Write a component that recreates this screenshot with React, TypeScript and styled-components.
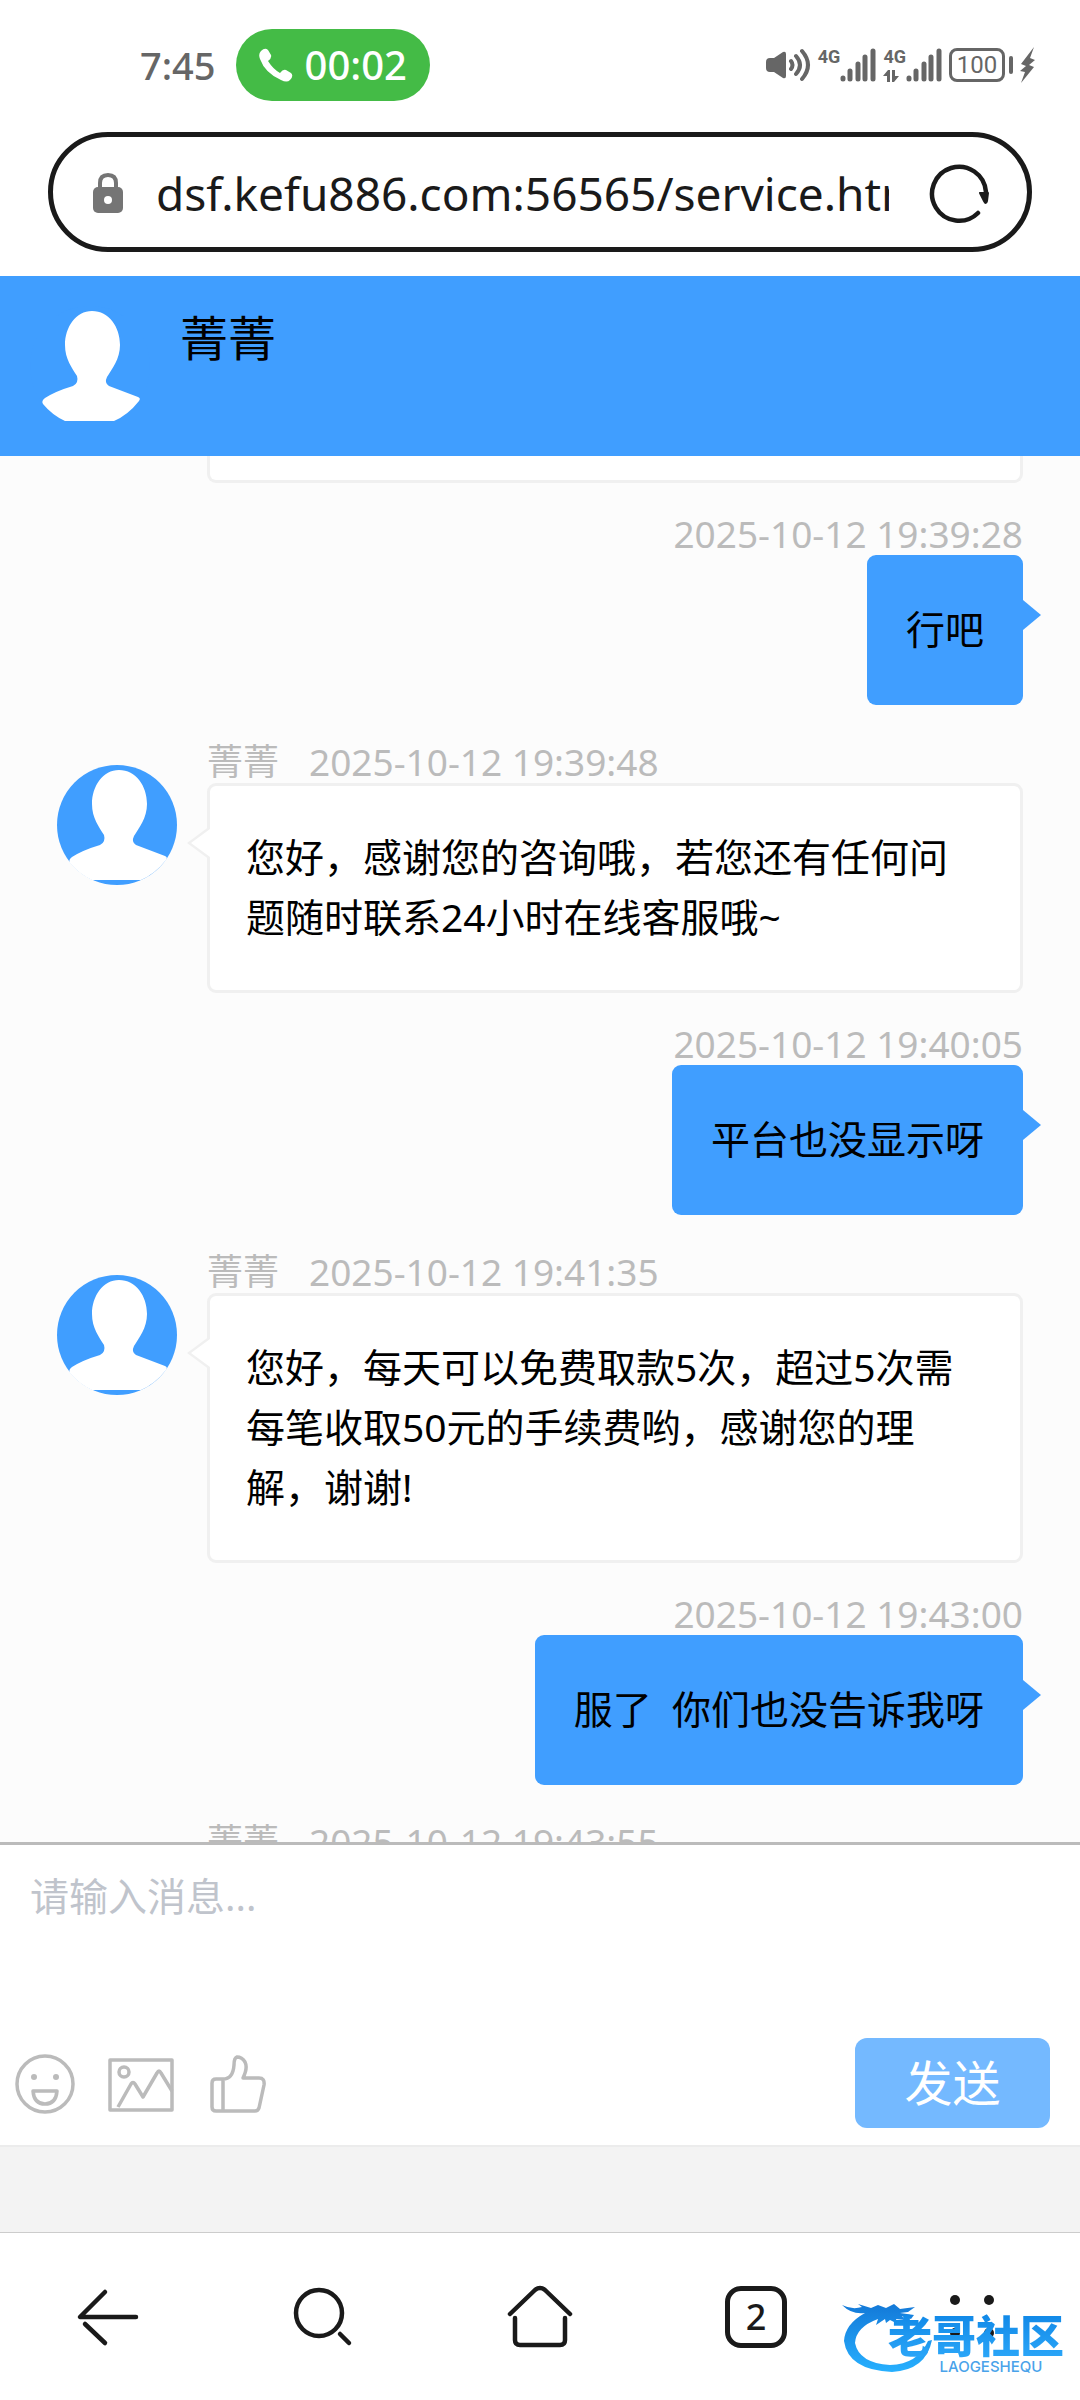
import React from "react";
import styled, { createGlobalStyle, css } from "styled-components";

const BLUE = "#409eff";
const INK = "#1a1a1a";
const GREY = "#bbbbbb";
const STATUS = "#666666";

const GlobalStyle = createGlobalStyle`
  *, *::before, *::after { box-sizing: border-box; }
  body {
    margin: 0;
    background: #fff;
    color: #000;
    font-family: "Noto Sans", "Noto Sans CJK SC", sans-serif;
  }
  button, input, textarea { font: inherit; color: inherit; }
  svg { display: block; }
`;

const Screen = styled.div`
  position: relative;
  display: flex;
  flex-direction: column;
  height: 100vh;
  overflow: hidden;
`;

const plainButton = css`
  display: flex;
  align-items: center;
  justify-content: center;
  padding: 0;
  border: 0;
  background: none;
`;

/* ---------- status bar ---------- */

const StatusBar = styled.div`
  display: flex;
  align-items: center;
  justify-content: space-between;
  height: 132px;
  padding: 0 44px 2px 140px;
  color: ${STATUS};
`;

const StatusGroup = styled.div<{ $gap: number }>`
  display: flex;
  align-items: center;
  gap: ${(p) => p.$gap}px;
`;

const Clock = styled.span`
  font-size: 38px;
  font-weight: 500;
  line-height: 72px;
`;

const CallPill = styled.button`
  ${plainButton}
  gap: 12px;
  height: 72px;
  padding: 0 23px;
  border-radius: 36px;
  background: #44bb46;
  color: #fff;
  font-size: 40px;
  font-weight: 500;
  line-height: 72px;
`;

const Signal = styled.div`
  display: flex;
  align-items: flex-start;
  height: 34px;
`;

const SignalLabel = styled.span`
  display: flex;
  flex-direction: column;
  gap: 4px;
  font-family: "Roboto", sans-serif;
  font-size: 18px;
  font-weight: 700;
  line-height: 18px;
`;

const Battery = styled.span`
  display: flex;
  align-items: center;
  justify-content: center;
  width: 56px;
  height: 34px;
  border: 3px solid ${STATUS};
  border-radius: 8px;
  font-family: "Roboto", sans-serif;
  font-size: 24px;
  line-height: 28px;
`;

const BatteryNub = styled.span`
  width: 4px;
  height: 18px;
  border-radius: 2px;
  background: ${STATUS};
`;

/* ---------- address bar ---------- */

const AddressBar = styled.div`
  display: flex;
  align-items: center;
  height: 120px;
  margin: 0 48px 24px;
  padding: 2px 36px 0 40px;
  border: 5px solid ${INK};
  border-radius: 60px;
  flex: none;
`;

const AddressInput = styled.input`
  flex: 1;
  min-width: 0;
  height: 80px;
  margin: 0 40px 0 33px;
  padding: 0;
  border: 0;
  outline: 0;
  background: none;
  color: ${INK};
  font-size: 46px;
`;

const ReloadButton = styled.button`
  ${plainButton}
`;

/* ---------- chat ---------- */

const ChatHeader = styled.header`
  display: flex;
  flex: none;
  gap: 30px;
  height: 180px;
  padding: 30px;
  background: ${BLUE};
`;

const ChatName = styled.h1`
  margin: 0;
  font-size: 48px;
  font-weight: 400;
  line-height: 64px;
`;

const MessageList = styled.main`
  flex: 1 1 0;
  min-height: 0;
  padding: 0 57px;
  overflow: hidden;
  background: #fcfcfc;
`;

const EarlierBubble = styled.div`
  height: 27px;
  margin-left: 150px;
  border: 3px solid #f0f0f0;
  border-top: 0;
  border-radius: 0 0 9px 9px;
  background: #fff;
`;

const SentRow = styled.article`
  display: flex;
  flex-direction: column;
  align-items: flex-end;
  padding-top: 30px;
`;

const ReceivedRow = styled.article`
  display: flex;
  align-items: flex-start;
  gap: 30px;
  padding-top: 36px;
`;

const AvatarSlot = styled.div`
  flex: none;
  padding-top: 24px;
`;

const ReceivedBody = styled.div`
  flex: 1;
  min-width: 0;
`;

const Meta = styled.div`
  display: flex;
  gap: 30px;
  color: ${GREY};
  font-size: 36px;
  line-height: 42px;
`;

const Time = styled.time`
  font-size: 37px;
`;

const bubble = css`
  position: relative;
  margin: 0;
  border-radius: 9px;
  font-size: 39px;
  line-height: 60px;
  white-space: pre-wrap;
`;

const SentBubble = styled.p`
  ${bubble}
  padding: 44px 39px 46px;
  background: ${BLUE};

  &::after {
    content: "";
    position: absolute;
    top: 45px;
    left: 100%;
    border: 15px solid transparent;
    border-left: 18px solid ${BLUE};
    border-right: 0;
  }
`;

const ReceivedBubble = styled.p`
  ${bubble}
  padding: 41px 36px 43px;
  border: 3px solid #f0f0f0;
  background: #fff;

  &::before,
  &::after {
    content: "";
    position: absolute;
    right: 100%;
    border-style: solid;
    border-color: transparent;
    border-left-width: 0;
  }
  &::before {
    top: 40px;
    border-width: 17px 23px 17px 0;
    border-right-color: #f0f0f0;
  }
  &::after {
    top: 43px;
    border-width: 14px 19px 14px 0;
    border-right-color: #fff;
  }
`;

/* ---------- composer ---------- */

const Composer = styled.form`
  display: flex;
  flex: none;
  flex-direction: column;
  border-top: 3px solid ${GREY};
  background: #fff;
`;

const MessageBox = styled.textarea`
  height: 193px;
  padding: 24px 30px;
  border: 0;
  outline: 0;
  resize: none;
  background: none;
  font-size: 39px;
  line-height: 54px;

  &::placeholder {
    color: #c0c4cc;
    opacity: 1;
  }
`;

const Tools = styled.div`
  display: flex;
  align-items: center;
  gap: 30px;
  padding: 0 30px 17px 12px;
`;

const ToolButton = styled.button`
  ${plainButton}
  color: ${GREY};
`;

const SendButton = styled.button`
  width: 195px;
  height: 90px;
  margin-left: auto;
  padding: 0;
  border: 0;
  border-radius: 12px;
  background: #74b9ff;
  color: #fff;
  font-size: 48px;
  line-height: 90px;
`;

const Spacer = styled.div`
  flex: none;
  height: 88px;
  border-top: 2px solid #ececec;
  border-bottom: 1px solid #cccccc;
  background: #f3f3f3;
`;

/* ---------- browser navigation ---------- */

const NavBar = styled.nav`
  display: grid;
  flex: none;
  grid-template-columns: repeat(5, 1fr);
  height: 167px;
  background: #fff;
`;

const NavButton = styled.button`
  ${plainButton}
  color: ${INK};
`;

const TabCount = styled.span`
  display: flex;
  align-items: center;
  justify-content: center;
  width: 62px;
  height: 62px;
  border: 5px solid ${INK};
  border-radius: 16px;
  font-size: 36px;
  font-weight: 500;
  line-height: 52px;
`;

/* ---------- watermark ---------- */

const Watermark = styled.div`
  position: absolute;
  right: 16px;
  bottom: 24px;
  display: flex;
  align-items: flex-end;
  pointer-events: none;
`;

const WatermarkText = styled.div`
  display: flex;
  flex-direction: column;
  align-items: center;
  margin-left: -54px;
`;

const WatermarkTitle = styled.span`
  background: linear-gradient(#0f86e6, #2ba6f8);
  background-clip: text;
  color: transparent;
  font-family: "Noto Sans CJK SC", sans-serif;
  font-size: 44px;
  font-weight: 900;
  line-height: 48px;
`;

const WatermarkSub = styled.span`
  padding-left: 30px;
  color: #4aa3ea;
  font-family: "Inter", sans-serif;
  font-size: 15px;
  font-weight: 500;
  line-height: 18px;
`;

/* ---------- drawings ---------- */

const PersonPath =
  "M62 5C79 5 90 21 90 39C90 53 82 63 77 71Q74 77 79 80L108 91Q111 92 109 95Q98 109 84 115H35Q22 109 13 98Q11 95 15 92Q26 85 43 80Q49 77 47 70C42 62 35 53 35 39C35 21 46 5 62 5Z";

const Avatar = () => (
  <svg width="120" height="120" viewBox="0 0 120 120" aria-hidden="true">
    <circle cx="60" cy="60" r="60" fill={BLUE} />
    <path d={PersonPath} fill="#fff" />
  </svg>
);

const PhoneIcon = () => (
  <svg width="34" height="34" viewBox="0 0 34 34" fill="currentColor" aria-hidden="true">
    <path d="M2 3Q6-1 9 2L12 7Q13 10 9 13Q14 21 21 25Q24 21 27 22L32 25Q35 28 31 32Q28 35 22 32Q6 25 1 11Q-1 6 2 3Z" />
  </svg>
);

const SpeakerIcon = () => (
  <svg width="45" height="34" viewBox="0 0 45 34" aria-hidden="true">
    <path d="M4 10H8L17 4Q20 3 20 6V28Q20 31 17 30L8 24H4Q0 24 0 20V14Q0 10 4 10Z" fill="currentColor" />
    <path d="M25 13Q28 17 25 21M30 8Q38 17 30 26M36 3Q48 17 36 31" fill="none" stroke="currentColor" strokeWidth="4" strokeLinecap="round" />
  </svg>
);

const SignalBars = () => (
  <svg width="36" height="34" viewBox="0 0 36 34" stroke="currentColor" strokeWidth="5" strokeLinecap="round" aria-hidden="true">
    <path d="M3 30V31M10 23V31M18 16V31M25 9V31M33 3V31" />
  </svg>
);

const DataArrows = () => (
  <svg width="16" height="12" viewBox="0 0 16 12" fill="currentColor" aria-hidden="true">
    <path d="M0 6L5 0H7V12H4V6ZM9 0H12V6H16L11 12H9Z" />
  </svg>
);

const BoltIcon = () => (
  <svg width="16" height="36" viewBox="0 0 16 36" fill="currentColor" aria-hidden="true">
    <path d="M14 0L1 17L6 19L0 24L5 25L1 36L14 20L9 18L15 13L10 11Z" />
  </svg>
);

const LockIcon = () => (
  <svg width="30" height="40" viewBox="0 0 30 40" aria-hidden="true">
    <path d="M7 17V10Q7 2 15 2T23 10V17" fill="none" stroke="#757575" strokeWidth="4" />
    <rect y="14" width="30" height="26" rx="5" fill="#757575" />
    <circle cx="15" cy="27" r="4" fill="#fff" />
  </svg>
);

const ReloadIcon = () => (
  <svg width="62" height="62" viewBox="0 0 62 62" aria-hidden="true">
    <path d="M49 51A27 27 0 1 1 57 30" fill="none" stroke={INK} strokeWidth="4.5" strokeLinecap="round" />
    <path d="M51 31H59L58 39Q57 43 55 39Z" fill={INK} stroke={INK} strokeWidth="2" strokeLinejoin="round" />
  </svg>
);

const ToolIcon = ({ children }: { children: React.ReactNode }) => (
  <svg width="66" height="66" viewBox="0 0 66 66" fill="none" stroke="currentColor" strokeWidth="3.5" strokeLinejoin="round" aria-hidden="true">
    {children}
  </svg>
);

const SmileIcon = () => (
  <ToolIcon>
    <circle cx="33" cy="34" r="28" />
    <circle cx="22" cy="27" r="3" fill="currentColor" stroke="none" />
    <circle cx="44" cy="27" r="3" fill="currentColor" stroke="none" />
    <path d="M21 41H45Q44 54 33 54T21 41Z" />
  </ToolIcon>
);

const PictureIcon = () => (
  <ToolIcon>
    <rect x="2" y="10" width="62" height="50" />
    <circle cx="16" cy="22" r="5" />
    <path d="M10 57L23 34Q25 31 27 34L35 47L49 23Q51 19 53 23L64 41" />
  </ToolIcon>
);

const ThumbIcon = () => (
  <ToolIcon>
    <path d="M19 29H12Q8 29 8 33V57Q8 61 12 61H51Q54 61 55 58L60 35Q61 28 55 28H39Q44 18 41 12Q38 7 33 7Q30 8 30 15Q29 29 19 29V61" />
  </ToolIcon>
);

const NavIcon = ({ children }: { children: React.ReactNode }) => (
  <svg width="66" height="66" viewBox="0 0 66 66" fill="none" stroke="currentColor" strokeWidth="4.5" strokeLinecap="round" strokeLinejoin="round" aria-hidden="true">
    {children}
  </svg>
);

const DragonMark = () => (
  <svg width="100" height="78" viewBox="0 0 100 78" aria-hidden="true">
    <defs>
      <linearGradient id="dragon" x1="0" y1="0" x2="0" y2="1">
        <stop offset="0" stopColor="#1379d8" />
        <stop offset="1" stopColor="#27b0ff" />
      </linearGradient>
    </defs>
    <path
      d="M0 7Q10 12 20 9L16 6L29 10L36 7L44 10L52 6L58 11L73 9L66 14L58 15L72 17L69 21L60 18L63 22L54 21L56 26L48 22L44 25L43 21L34 27L36 21Q14 29 13 45Q17 65 48 67Q76 66 86 43L90 42Q84 72 50 74Q6 72 2 43Q3 26 23 15Q10 17 0 7Z"
      fill="url(#dragon)"
    />
  </svg>
);

/* ---------- page ---------- */

type Message = { from?: string; time: string; text?: string };

const messages: Message[] = [
  { time: "2025-10-12 19:39:28", text: "行吧" },
  { from: "菁菁", time: "2025-10-12 19:39:48", text: "您好，感谢您的咨询哦，若您还有任何问题随时联系24小时在线客服哦~" },
  { time: "2025-10-12 19:40:05", text: "平台也没显示呀" },
  { from: "菁菁", time: "2025-10-12 19:41:35", text: "您好，每天可以免费取款5次，超过5次需每笔收取50元的手续费哟，感谢您的理解，谢谢!" },
  { time: "2025-10-12 19:43:00", text: "服了  你们也没告诉我呀" },
  { from: "菁菁", time: "2025-10-12 19:43:55" },
];

const MessageRow = ({ from, time, text }: Message) =>
  from ? (
    <ReceivedRow>
      <AvatarSlot>
        <Avatar />
      </AvatarSlot>
      <ReceivedBody>
        <Meta>
          <span>{from}</span>
          <Time>{time}</Time>
        </Meta>
        {text && <ReceivedBubble>{text}</ReceivedBubble>}
      </ReceivedBody>
    </ReceivedRow>
  ) : (
    <SentRow>
      <Meta>
        <Time>{time}</Time>
      </Meta>
      <SentBubble>{text}</SentBubble>
    </SentRow>
  );

export default function App() {
  return (
    <Screen>
      <GlobalStyle />
      <StatusBar>
        <StatusGroup $gap={20}>
          <Clock>7:45</Clock>
          <CallPill type="button">
            <PhoneIcon />
            00:02
          </CallPill>
        </StatusGroup>
        <StatusGroup $gap={7}>
          <SpeakerIcon />
          <Signal>
            <SignalLabel>4G</SignalLabel>
            <SignalBars />
          </Signal>
          <Signal>
            <SignalLabel>
              4G
              <DataArrows />
            </SignalLabel>
            <SignalBars />
          </Signal>
          <StatusGroup $gap={4}>
            <Battery>100</Battery>
            <BatteryNub />
          </StatusGroup>
          <BoltIcon />
        </StatusGroup>
      </StatusBar>

      <AddressBar>
        <LockIcon />
        <AddressInput aria-label="网址" defaultValue="dsf.kefu886.com:56565/service.html" />
        <ReloadButton type="button" aria-label="刷新">
          <ReloadIcon />
        </ReloadButton>
      </AddressBar>

      <ChatHeader>
        <Avatar />
        <ChatName>菁菁</ChatName>
      </ChatHeader>

      <MessageList>
        <EarlierBubble />
        {messages.map((m) => (
          <MessageRow key={m.time} {...m} />
        ))}
      </MessageList>

      <Composer onSubmit={(e) => e.preventDefault()}>
        <MessageBox aria-label="消息" placeholder="请输入消息..." />
        <Tools>
          <ToolButton type="button" aria-label="表情">
            <SmileIcon />
          </ToolButton>
          <ToolButton type="button" aria-label="图片">
            <PictureIcon />
          </ToolButton>
          <ToolButton type="button" aria-label="评价">
            <ThumbIcon />
          </ToolButton>
          <SendButton type="submit">发送</SendButton>
        </Tools>
      </Composer>
      <Spacer />

      <NavBar>
        <NavButton type="button" aria-label="后退">
          <NavIcon>
            <path d="M30 8L5 33H61M10 40L30 59" />
          </NavIcon>
        </NavButton>
        <NavButton type="button" aria-label="搜索">
          <NavIcon>
            <circle cx="28" cy="29" r="23" />
            <path d="M49 50L58 59" />
          </NavIcon>
        </NavButton>
        <NavButton type="button" aria-label="主页">
          <NavIcon>
            <path d="M3 30L28 6Q33 2 38 6L63 30" />
            <path d="M8 34V56Q8 61 13 61H53Q58 61 58 56V34" />
          </NavIcon>
        </NavButton>
        <NavButton type="button" aria-label="标签页">
          <TabCount>2</TabCount>
        </NavButton>
        <NavButton type="button" aria-label="菜单">
          <NavIcon>
            <g fill="currentColor" stroke="none">
              <circle cx="16" cy="16" r="5" />
              <circle cx="50" cy="16" r="5" />
              <circle cx="16" cy="49" r="5" />
              <circle cx="50" cy="49" r="5" />
            </g>
          </NavIcon>
        </NavButton>
      </NavBar>

      <Watermark>
        <DragonMark />
        <WatermarkText>
          <WatermarkTitle>老哥社区</WatermarkTitle>
          <WatermarkSub>LAOGESHEQU</WatermarkSub>
        </WatermarkText>
      </Watermark>
    </Screen>
  );
}
